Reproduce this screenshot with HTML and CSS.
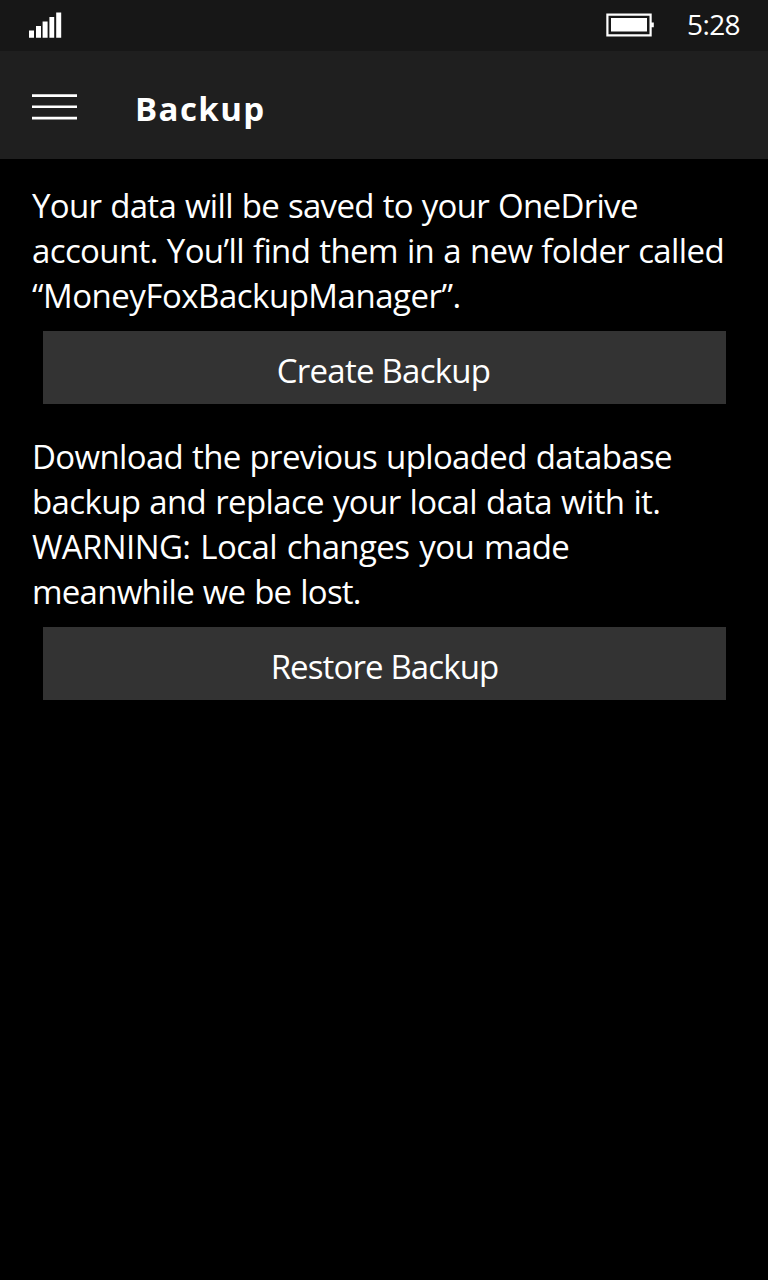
FILE: index.html
```html
<!DOCTYPE html>
<html lang="en">
<head>
<meta charset="utf-8">
<title>Backup</title>
<link rel="stylesheet" href="styles.css">
</head>
<body>
<div class="status">
  <svg class="signal" width="33" height="26" viewBox="0 0 33 26" fill="#fff"><path d="M0 18.400h5v7.300H0zM7 14h5v11.700H7zM13.600 9.400h5v16.300h-5zM20.400 5h4.800v20.700h-4.800zM27.200.6h5v25.100h-5z"/></svg>
  <svg class="battery" width="48" height="24" viewBox="0 0 48 24"><path d="M1.400 1.700h43.200v20.600H1.400z" fill="none" stroke="#fff" stroke-width="2.200"/><path d="M5 5h36v13.600H5zM45 9.500h2.800v4.800H45z" fill="#fff"/></svg>
  <span class="clock">5:28</span>
</div>
<header class="header">
  <svg class="menu" width="45" height="26" viewBox="0 0 45 26" fill="#fff"><path d="M0 .3h45v2.600H0zM0 11.500h45v2.600H0zM0 22.800h45v2.600H0z"/></svg>
  <h1 class="title">Backup</h1>
</header>
<main class="content">
  <p class="text">
    <span class="line l1">Your data will be saved to your OneDrive</span>
    <span class="line l2">account. You’ll find them in a new folder called</span>
    <span class="line l3">“MoneyFoxBackupManager”.</span>
  </p>
  <button class="button b1">Create Backup</button>
  <p class="text">
    <span class="line l4">Download the previous uploaded database</span>
    <span class="line l5">backup and replace your local data with it.</span>
    <span class="line l6">WARNING: Local changes you made</span>
    <span class="line l7">meanwhile we be lost.</span>
  </p>
  <button class="button b2">Restore Backup</button>
</main>
</body>
</html>
```
FILE: styles.css
```css
* { box-sizing: border-box; }
body { margin: 0; background: #000; color: #fff; font-family: "Open Sans", "Noto Sans", sans-serif; min-height: 1280px; }
.status { height: 51px; background: #171717; display: flex; align-items: flex-start; padding: 0 28px 0 29px; }
.signal { margin-top: 12px; }
.battery { margin: 13px 0 0 auto; }
.clock { width: 53px; margin-left: 33px; font-size: 28px; line-height: 48px; letter-spacing: -0.6px; white-space: nowrap; }
.header { height: 108px; background: #1f1f1f; display: flex; align-items: center; padding: 4px 32px 0; }
.menu { flex: none; }
.title { margin: 3px 0 0 58px; font-size: 33px; line-height: 45px; letter-spacing: 1.4px; font-weight: 700; }
.content { display: flex; flex-direction: column; padding: 24px 32px 0; }
.text { margin: 0; font-size: 33px; line-height: 45px; word-spacing: 1px; }
.line { display: block; width: max-content; white-space: nowrap; }
.l1 { letter-spacing: -0.685px; }
.l2 { letter-spacing: -0.61px; }
.l3 { letter-spacing: -0.49px; }
.l4 { letter-spacing: -0.65px; }
.l5 { letter-spacing: -0.625px; }
.l6 { letter-spacing: -0.61px; word-spacing: 2px; }
.l7 { letter-spacing: -0.75px; }
.button { display: block; height: 73px; margin: 13px 10px 30px 11px; padding: 6px 0 0; border: 0; background: #333; color: #fff; font: inherit; font-size: 33px; line-height: 45px; }
.b1 { letter-spacing: -0.75px; padding-right: 2px; }
.b2 { letter-spacing: -0.88px; }
```
